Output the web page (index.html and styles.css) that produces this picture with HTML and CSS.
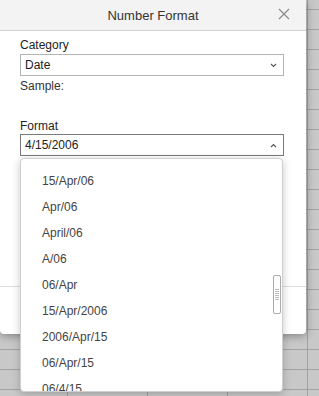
FILE: index.html
```html
<!DOCTYPE html>
<html>
<head>
<meta charset="utf-8">
<link rel="stylesheet" href="styles.css">
</head>
<body>
<div class="dialog">
  <div class="header">
    <span class="title">Number Format</span>
    <svg class="close" width="12" height="12" viewBox="0 0 12 12"><path d="M1 1L11 11M11 1L1 11" stroke="#8a8a8a" stroke-width="1.2" fill="none"/></svg>
  </div>
  <div class="body">
    <div class="label">Category</div>
    <div class="select">
      <span>Date</span>
      <svg class="chev" width="7" height="5" viewBox="0 0 7 5"><polyline points="1,1 3.5,3.5 6,1" stroke="#555" stroke-width="1.1" fill="none"/></svg>
    </div>
    <div class="sample">Sample:</div>
    <div class="label fmt">Format</div>
    <div class="field">
      <div class="select focus">
        <span>4/15/2006</span>
        <svg class="chev" width="7" height="5" viewBox="0 0 7 5"><polyline points="1,4 3.5,1.5 6,4" stroke="#555" stroke-width="1.1" fill="none"/></svg>
      </div>
      <div class="list">
        <div class="item">15/Apr/06</div>
        <div class="item">Apr/06</div>
        <div class="item">April/06</div>
        <div class="item">A/06</div>
        <div class="item">06/Apr</div>
        <div class="item">15/Apr/2006</div>
        <div class="item">2006/Apr/15</div>
        <div class="item">06/Apr/15</div>
        <div class="item">06/4/15</div>
        <div class="thumb"><i></i><i></i><i></i><i></i><i></i><i></i></div>
      </div>
    </div>
  </div>
  <div class="footer"></div>
</div>
</body>
</html>
```
FILE: styles.css
```css
html, body {
  margin: 0;
  padding: 0;
  height: 100%;
}
body {
  width: 319px;
  height: 396px;
  overflow: hidden;
  font-family: "Liberation Sans", Arial, sans-serif;
  background-color: #c8c8c8;
  background-image:
    linear-gradient(to right, #a2a2a2 1px, transparent 1px),
    linear-gradient(to bottom, #a2a2a2 1px, transparent 1px);
  background-size: 80px 20px;
  background-position: 67px 9px;
}
.dialog {
  width: 306px;
  height: 334px;
  background: #fff;
  border-radius: 0 0 4px 4px;
  box-shadow: 0 2px 8px rgba(0,0,0,0.35);
  display: flex;
  flex-direction: column;
}
.header {
  height: 30px;
  background: #f3f3f3;
  border-bottom: 1px solid #cfcfcf;
  display: flex;
  align-items: center;
  justify-content: center;
  position: relative;
}
.title {
  font-size: 13px;
  color: #333;
}
.close {
  position: absolute;
  right: 16px;
  top: 8px;
}
.body {
  flex: 1;
  padding: 7px 22px 0 20px;
}
.label {
  font-size: 12px;
  line-height: 14px;
  color: #1e1e1e;
}
.label.fmt {
  margin-top: 26px;
}
.select {
  margin-top: 2px;
  height: 20px;
  border: 1px solid #b4b4b4;
  display: flex;
  align-items: center;
  justify-content: space-between;
  padding: 0 6px 0 4px;
  font-size: 12px;
  color: #222;
}
.select.focus {
  margin-top: 1px;
  border-color: #7a7a7a;
}
.sample {
  margin-top: 3px;
  font-size: 12px;
  line-height: 14px;
  color: #333;
}
.field {
  position: relative;
}
.list {
  position: absolute;
  left: 0;
  right: 1px;
  top: calc(100% + 2px);
  height: 223px;
  padding-top: 9px;
  background: #fff;
  border: 1px solid #cfcfcf;
  border-radius: 4px;
  box-shadow: 0 2px 8px rgba(0,0,0,0.22);
  overflow: hidden;
}
.item {
  height: 26px;
  line-height: 26px;
  padding-left: 21px;
  font-size: 12px;
  color: #444;
}
.thumb {
  position: absolute;
  left: 252px;
  top: 116px;
  width: 6px;
  height: 37px;
  border: 1px solid #aaa;
  border-radius: 2px;
  background: #fff;
  display: flex;
  flex-direction: column;
  align-items: center;
  justify-content: center;
  gap: 1px;
}
.thumb i {
  display: block;
  width: 4px;
  height: 1px;
  background: #bbb;
}
.footer {
  height: 47px;
  border-top: 1px solid #dcdcdc;
}
```
